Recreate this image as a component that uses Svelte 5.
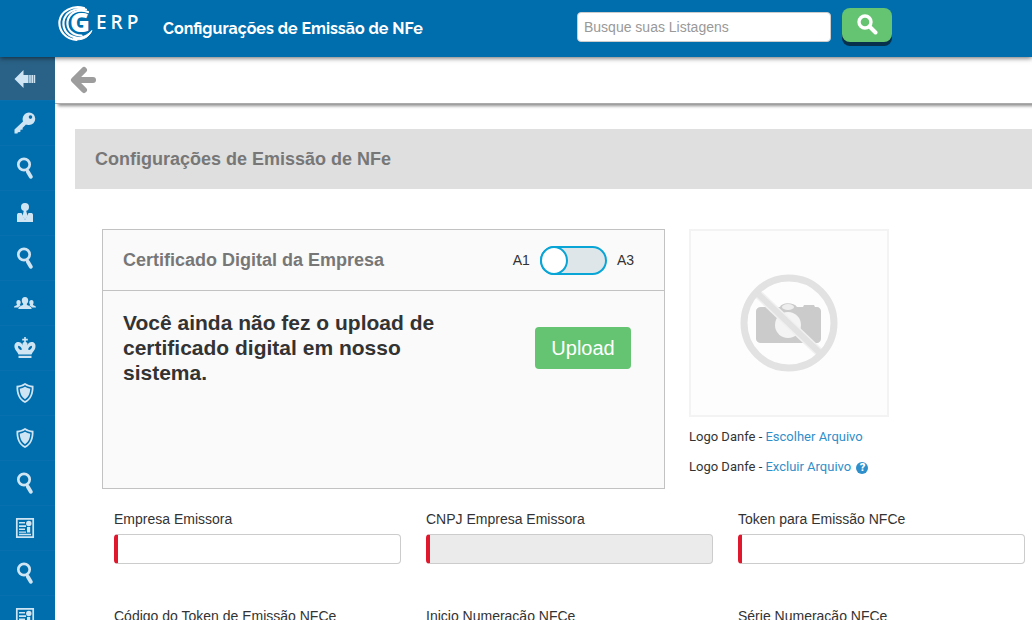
<script>
	const title = 'Configurações de Emissão de NFe';

	const menu = [
		{ icon: 'collapse', label: 'Recolher menu' },
		{ icon: 'key', label: 'Acessos' },
		{ icon: 'search', label: 'Consultar acessos' },
		{ icon: 'person', label: 'Clientes' },
		{ icon: 'search', label: 'Consultar clientes' },
		{ icon: 'group', label: 'Equipes' },
		{ icon: 'crown', label: 'Administração' },
		{ icon: 'shield', label: 'Segurança' },
		{ icon: 'shield', label: 'Permissões' },
		{ icon: 'search', label: 'Consultar permissões' },
		{ icon: 'news', label: 'Notícias' },
		{ icon: 'search', label: 'Consultar notícias' },
		{ icon: 'news', label: 'Relatórios' }
	];

	const fields = [
		{ id: 'empresa', label: 'Empresa Emissora' },
		{ id: 'cnpj', label: 'CNPJ Empresa Emissora', disabled: true },
		{ id: 'token', label: 'Token para Emissão NFCe' },
		{ id: 'codigo-token', label: 'Código do Token de Emissão NFCe' },
		{ id: 'inicio', label: 'Inicio Numeração NFCe' },
		{ id: 'serie', label: 'Série Numeração NFCe' }
	];

	let search = '';
	let isA3 = false;
	let values = {};
</script>

<div class="page">
	<header class="topbar">
		<a class="logo" href="/" aria-label="GERP">
			<svg width="40" height="36" viewBox="0 0 40 36" fill="none" stroke="#fff" stroke-linecap="round">
				<path d="M27 2C15-1 4 5 2.500 15c-1 10 6 18 17 19" stroke-width="2.200" />
				<path d="M29 3.500C17 1 8 7 6.500 15.500c-1 9 5 15.500 15 16.500" stroke-width="2.200" />
				<path d="M31 6C21 2 12 7 10.500 15.500c-1 8 5 14 14 14" stroke-width="2.200" />
				<path d="M17 33.500c8 1.500 15-2 18-9-5 5-10 7.500-18 7z" fill="#fff" stroke-width="1" />
			</svg>
			<span class="logo-g">G</span>
			<span class="logo-text"><span>E</span><span>R</span><span>P</span></span>
		</a>
		<span class="topbar-title">{title}</span>
		<form class="search" on:submit|preventDefault>
			<input type="text" bind:value={search} placeholder="Busque suas Listagens" aria-label="Busque suas Listagens" />
			<button type="submit" aria-label="Buscar">
				<svg width="22" height="22" viewBox="0 0 22 22" fill="none" stroke="#fff">
					<circle cx="9" cy="8" r="6" stroke-width="3.400" />
					<path d="M14 13l5.500 5.500" stroke-width="4" stroke-linecap="round" />
				</svg>
			</button>
		</form>
	</header>

	<div class="body">
		<nav class="sidebar">
			{#each menu as item, i}
				<a href="#item-{i}" class:active={i === 0} aria-label={item.label}>
					<svg width="22" height="22" viewBox="0 0 22 22">
						{#if item.icon === 'collapse'}
							<path d="M.5 11L9.500 2v5H12v8H9.500v5z" />
							<path d="M11 7h3.500v8H11zM15.200 7h1.600v8h-1.600zM17.400 7h1.600v8h-1.600zM19.600 7h1.600v8h-1.600z" />
						{:else if item.icon === 'key'}
							<path fill-rule="evenodd" d="M15 .5a6 6 0 0 1 0 12.500c-1.500 0-2.300-.2-3-.5L8.500 16l.3 1.500-2.300.2-.2 2.300-2.500.2-.3 1.300H.5v-4L9 9.500C7.500 4.500 11 .5 15 .5zM16.500 3.300a1.800 1.800 0 1 0 0 3.600 1.800 1.800 0 0 0 0-3.600z" />
						{:else if item.icon === 'search'}
							<circle cx="10" cy="7.500" r="5.700" fill="none" stroke="#cfe5f3" stroke-width="2.700" />
							<path d="M12.700 13l1.500 2.500" fill="none" stroke="#cfe5f3" stroke-width="2.500" />
							<path d="M14 15l2.800 4.800" fill="none" stroke="#cfe5f3" stroke-width="3.800" stroke-linecap="round" />
						{:else if item.icon === 'person'}
							<circle cx="11" cy="5" r="4" />
							<path d="M10 8h2l1.500 6L11 18l-2.500-4z" />
							<path d="M3 20v-7c0-1.500 1-2 2-2h2.500L11 18l3.500-7H17c1 0 2 .5 2 2v7z" />
						{:else if item.icon === 'group'}
							<path d="M11 5c2 0 3.400 1.500 3.200 3.800-.1 1.500-.7 2.500-1.500 3.200.2 2 5 1.700 5 5H4.300c0-3.300 4.800-3 5-5-.8-.7-1.400-1.700-1.500-3.200C7.600 6.500 9 5 11 5z" />
							<path d="M4.500 8C6 8 6.800 9 6.700 10.500c0 1-.5 2-1 2.300l1 .7c-1.500.7-2.200 1.300-2.500 2H0c0-2 3-1.500 3-2.900-1-1.600-.9-4.600 1.500-4.600zM17.500 8c-1.500 0-2.300 1-2.200 2.500 0 1 .5 2 1 2.300l-1 .7c1.500.7 2.200 1.300 2.500 2H22c0-2-3-1.500-3-2.900 1-1.600.9-4.600-1.500-4.600z" />
						{:else if item.icon === 'crown'}
							<path fill-rule="evenodd" d="M10.200 0h1.600v1.800h2v1.700h-2V5c1.700.3 2.200 2 1.200 3.500C14.500 5.500 16.500 4.500 18.500 5c2.800.7 3.500 3.500 2.800 6-.7 2.500-2.800 4-3.800 6.500h-13c-1-2.500-3.100-4-3.800-6.500C0 8.500.7 5.700 3.500 5c2-.5 4 .5 5.500 3.500C8 7 8.500 5.300 10.200 5V3.500h-2V1.800h2zM4.500 8.800c-1.200.7-.2 3.200 2 4.200l1.500-.4c-.5-1.800-1.800-3.500-3.500-3.800zM17.500 8.800c-1.700.3-3 2-3.500 3.800l1.500.4c2.200-1 3.200-3.500 2-4.200z" />
							<path d="M4.500 18.800h13V21h-13z" />
						{:else if item.icon === 'shield'}
							<path fill-rule="evenodd" d="M11 1c2.500 1.700 5 2.500 8.500 2.700C20 11 17.500 18 11 21 4.500 18 2 11 2.500 3.700 6 3.500 8.500 2.700 11 1zM11 3C9 4.400 6.700 5.100 4.200 5.400 4.200 11 6 16.400 11 19.100c5-2.700 6.800-8.100 6.800-13.700C15.300 5.100 13 4.400 11 3z" />
							<path d="M11 4.800c1.600 1 3.400 1.700 5.300 2C16 11.500 14.500 15 11 17.300 7.500 15 6 11.500 5.700 6.800c1.900-.3 3.700-1 5.300-2z" />
						{:else}
							<path d="M2.800 1.800h16.400v18.400H2.800z" fill="none" stroke="#cfe5f3" stroke-width="1.700" />
							<path d="M5 5h6v1.600H5zM5 8.300h7v1.600H5zM5 11.500h6v1.600H5zM5 14.500h7v1.200H5zM5 16.800h12v1.400H5z" />
							<circle cx="14.800" cy="6.500" r="2.700" />
							<path d="M13 10h3.200v5.500H13z" />
						{/if}
					</svg>
				</a>
			{/each}
		</nav>

		<main>
			<div class="toolbar">
				<button type="button" aria-label="Voltar">
					<svg width="26" height="28" viewBox="0 0 26 28" fill="none" stroke="#9d9d9d" stroke-width="6">
						<path d="M14 4L4 14l10 10" stroke-linecap="round" stroke-linejoin="round" />
						<path d="M5 14h18" stroke-linecap="round" />
					</svg>
				</button>
			</div>

			<h1>{title}</h1>

			<div class="content">
				<div class="row">
					<section class="card">
						<div class="card-header">
							<h2>Certificado Digital da Empresa</h2>
							<div class="switch">
								<label for="tipo">A1</label>
								<input id="tipo" type="checkbox" role="switch" bind:checked={isA3} />
								<label for="tipo">A3</label>
							</div>
						</div>
						<div class="card-body">
							<p>Você ainda não fez o upload de certificado digital em nosso sistema.</p>
							<button type="button" class="upload">Upload</button>
						</div>
					</section>

					<section class="danfe">
						<div class="photo">
							<svg width="100" height="100" viewBox="0 0 100 100">
								<path fill="#cbcbcb" d="M22 34h19c2-5 14-5 17 0h6l1-2h10l1 2h2c2 0 4 2 4 4v28c0 2-2 4-4 4H22c-3 0-5-2-5-4V38c0-2 2-4 5-4z" />
								<ellipse cx="49" cy="34" rx="6" ry="3" fill="#eee" />
								<circle cx="49" cy="52" r="13" fill="#f4f4f4" />
								<path d="M17 19l66 63" stroke="#f0f0f0" stroke-width="9" />
								<path d="M17 19l66 63" stroke="#e2e2e2" stroke-width="6" />
								<circle cx="50" cy="50" r="45" fill="none" stroke="#e2e2e2" stroke-width="7" />
							</svg>
						</div>
						<p>Logo Danfe - <a href="#escolher">Escolher Arquivo</a></p>
						<p>
							Logo Danfe - <a href="#excluir">Excluir Arquivo</a>
							<span class="help">?</span>
						</p>
					</section>
				</div>

				<form class="fields" on:submit|preventDefault>
					{#each fields as field}
						<div class="field">
							<label for={field.id}>{field.label}</label>
							<input id={field.id} type="text" bind:value={values[field.id]} disabled={field.disabled} />
						</div>
					{/each}
				</form>
			</div>
		</main>
	</div>
</div>

<style>
	:global(body) {
		margin: 0;
		background: #fff;
	}
	.page {
		display: flex;
		flex-direction: column;
		height: 100vh;
		overflow: hidden;
		font-family: "Liberation Sans", Arial, sans-serif;
		font-size: 14px;
		line-height: 20px;
		color: #333;
	}
	button, input {
		font-family: inherit;
		box-sizing: border-box;
		margin: 0;
	}
	h1, h2, p {
		margin: 0;
	}

	/* top bar */
	.topbar {
		flex: none;
		display: flex;
		align-items: center;
		height: 57px;
		padding-left: 57px;
		background: #006dad;
		box-shadow: 0 1px 5px rgba(0, 0, 0, 0.6);
		position: relative;
		z-index: 2;
	}
	.logo {
		display: flex;
		align-items: center;
		width: 106px;
		height: 36px;
		padding-bottom: 10px;
		color: #fff;
		text-decoration: none;
		font-family: "Open Sans", sans-serif;
	}
	.logo-g {
		width: 26px;
		margin-left: -27px;
		padding-bottom: 4px;
		font-size: 27px;
		font-weight: 800;
	}
	.logo-text {
		display: flex;
		gap: 4px;
		padding-bottom: 4px;
		font-size: 19px;
		font-weight: 600;
	}
	.topbar-title {
		width: 414px;
		font-family: Raleway, Montserrat, Inter, sans-serif;
		font-size: 16px;
		font-weight: 700;
		color: #fff;
	}
	.search {
		display: flex;
		align-items: center;
		gap: 11px;
		padding-bottom: 4px;
	}
	.search input {
		width: 254px;
		height: 30px;
		padding: 0 6px;
		border: 1px solid #ccc;
		border-radius: 4px;
		font-size: 14px;
	}
	.search input::placeholder {
		color: #999;
	}
	.search button {
		display: flex;
		align-items: center;
		justify-content: center;
		width: 50px;
		height: 34px;
		margin-bottom: 3px;
		padding: 0;
		border: 0;
		border-radius: 8px;
		background: #65c471;
		box-shadow: 0 4px 0 #06304b;
	}

	/* side menu */
	.body {
		display: flex;
		flex: 1;
		min-height: 0;
	}
	.sidebar {
		flex: none;
		width: 55px;
		overflow: hidden;
		background: #006dad;
	}
	.sidebar a {
		display: flex;
		align-items: center;
		justify-content: center;
		box-sizing: border-box;
		height: 45px;
		padding-right: 5px;
		border-bottom: 1px solid #0870ae;
	}
	.sidebar a.active {
		height: 44px;
		background: #2a6287;
	}
	.sidebar svg {
		fill: #cfe5f3;
	}

	main {
		flex: 1;
		min-width: 0;
		overflow: hidden;
	}
	.toolbar {
		display: flex;
		align-items: center;
		height: 46px;
		padding-left: 15px;
		border-bottom: 1px solid #aaa;
		box-shadow: 3px 2px 3px rgba(0, 0, 0, 0.45);
	}
	.toolbar button {
		display: flex;
		padding: 0;
		border: 0;
		background: none;
	}
	h1 {
		margin: 25px 0 0 20px;
		padding: 0 20px;
		line-height: 60px;
		font-size: 18px;
		background: #dfdfdf;
		color: #777;
	}
	.content {
		padding: 40px 7px 0 47px;
	}
	.row {
		display: flex;
		gap: 24px;
	}

	/* certificate card */
	.card {
		box-sizing: border-box;
		width: 61%;
		min-height: 260px;
		border: 1px solid #c2c2c2;
		background: #fafafa;
	}
	.card-header {
		display: flex;
		align-items: center;
		justify-content: space-between;
		height: 60px;
		padding: 0 30px 0 20px;
		border-bottom: 1px solid #c2c2c2;
	}
	h2 {
		font-size: 18px;
		color: #777;
	}
	.switch {
		display: flex;
		align-items: center;
		gap: 10px;
	}
	.switch input {
		appearance: none;
		width: 67px;
		height: 29px;
		border: 2px solid #08a5d6;
		border-radius: 15px;
		background: #dee6e9;
	}
	.switch input::before {
		content: '';
		display: block;
		box-sizing: border-box;
		width: 28px;
		height: 29px;
		margin: -2px;
		border: 2px solid #08a5d6;
		border-radius: 50%;
		background: #fff;
	}
	.switch input:checked::before {
		margin-left: 37px;
	}
	.card-body {
		display: flex;
		align-items: flex-start;
		justify-content: space-between;
		padding: 19px 33px 20px 20px;
	}
	.card-body p {
		width: 340px;
		font-size: 21px;
		font-weight: 700;
		line-height: 25px;
	}
	.upload {
		width: 96px;
		height: 42px;
		margin-top: 17px;
		padding: 0;
		border: 0;
		border-radius: 4px;
		background: #65c471;
		color: #fff;
		font-size: 20px;
	}

	/* danfe logo */
	.danfe {
		font-family: Roboto, sans-serif;
		font-size: 13px;
	}
	.danfe p {
		margin-top: 10px;
	}
	.danfe a {
		color: #2f8fca;
		text-decoration: none;
	}
	.photo {
		display: flex;
		align-items: center;
		justify-content: center;
		box-sizing: border-box;
		width: 200px;
		height: 188px;
		border: 2px solid #f3f3f3;
		background: #fdfdfd;
	}
	.help {
		display: inline-block;
		width: 12px;
		margin-left: 2px;
		border-radius: 50%;
		background: #2f8fca;
		color: #fff;
		font-size: 11px;
		font-weight: 900;
		line-height: 12px;
		text-align: center;
	}

	/* fields */
	.fields {
		display: grid;
		grid-template-columns: repeat(3, 1fr);
		gap: 42px 25px;
		padding: 20px 0 0 12px;
	}
	.field {
		display: flex;
		flex-direction: column;
		gap: 5px;
	}
	.field input {
		width: 100%;
		height: 30px;
		padding: 0 8px;
		border: 1px solid #ccc;
		border-left: 4px solid #e0182d;
		border-radius: 4px;
		background: #fff;
	}
	.field input:disabled {
		background: #ebebeb;
	}
</style>
